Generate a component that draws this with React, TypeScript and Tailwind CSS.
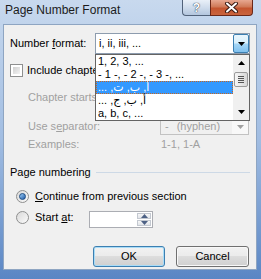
import type { ReactNode } from 'react';

const disabled = 'text-[#a0a0a0]';

function Arrow({ dir, color = '#000' }: { dir: 'up' | 'down'; color?: string }) {
    return (
        <svg width="7" height="4" viewBox="0 0 7 4">
            <polygon points={dir === 'down' ? '0,0 7,0 3.5,4' : '0,4 7,4 3.5,0'} fill={color} />
        </svg>
    );
}

function Radio({ checked }: { checked?: boolean }) {
    return (
        <span className="flex h-[13px] w-[13px] shrink-0 items-center justify-center rounded-full border border-[#8e8f8f] bg-gradient-to-br from-[#d9d9d9] to-[#fbfbfb]">
            {checked && (
                <span className="h-[7px] w-[7px] rounded-full border border-[#1b4a82] bg-gradient-to-br from-[#9fd0f8] to-[#1d5aa6]" />
            )}
        </span>
    );
}

function Button({ children, primary }: { children: ReactNode; primary?: boolean }) {
    return (
        <div
            className={`flex h-[21px] items-center justify-center rounded-[3px] border bg-[linear-gradient(#f2f2f2,#ebebeb_50%,#dddddd_50%,#cfcfcf)] ${primary
                ? 'w-[72px] border-[#3c7fb1] shadow-[inset_0_0_0_1px_#a9dcf7]'
                : 'w-[73px] border-[#707070] shadow-[inset_0_0_0_1px_#f8f8f8]'
                }`}
        >
            {children}
        </div>
    );
}

export default function App() {
    const items = [
        { label: '1, 2, 3, ...' },
        { label: '- 1 -, - 2 -, - 3 -, ...' },
        { label: 'أ, ب, ت, ...', rtl: true, selected: true },
        { label: 'أ, ب, ج, ...', rtl: true },
        { label: 'a, b, c, ...' },
    ];

    return (
        <div className="flex h-[279px] w-[261px] flex-col overflow-hidden bg-gradient-to-b from-[#c8d9ee] via-[#a1bde2] to-[#5a86c4] font-['Liberation_Sans','DejaVu_Sans',sans-serif] text-[11px] text-black">
            {/* Title bar */}
            <div className="flex h-[24px] shrink-0 items-start">
                <span className="pl-[5px] pt-[3px] text-[12px] leading-[15px] text-[#1b1b1b]">Page Number Format</span>
                <div className="ml-auto mr-[8px] flex h-[16px]">
                    <div className="flex w-[28px] items-center justify-center rounded-bl-[4px] border border-r-0 border-t-0 border-[#51627a] bg-gradient-to-b from-[#e9f0f8] via-[#cfdcec] to-[#b3c6de] text-[12px] font-bold leading-none text-white [text-shadow:0_0_1px_#2c3a4c,0_0_1px_#2c3a4c]">
                        ?
                    </div>
                    <div className="flex w-[43px] items-center justify-center rounded-br-[4px] border border-t-0 border-[#6b2818] bg-[linear-gradient(#e7a891,#d07a58_45%,#c4552f_55%,#c9643d)]">
                        <svg width="15" height="11" viewBox="0 0 15 11">
                            <path d="M3 1.5 L12 9.5 M12 1.5 L3 9.5" stroke="#3a1a12" strokeWidth="4" strokeLinecap="round" />
                            <path d="M3 1.5 L12 9.5 M12 1.5 L3 9.5" stroke="#fff" strokeWidth="2" strokeLinecap="round" />
                        </svg>
                    </div>
                </div>
            </div>

            {/* Client area */}
            <div className="relative ml-[3px] flex h-[246px] w-[254px] shrink-0 flex-col border border-[#8ea5c2] bg-[#f0f0f0]">
                <div className="mt-[8px] flex h-[21px] items-center pl-[6px]">
                    <span className="w-[85px]">
                        Number <span className="underline">f</span>ormat:
                    </span>
                    <div className="flex h-[21px] w-[155px] border border-[#8d9cae] bg-white">
                        <span className="flex-1 pl-[3px] leading-[19px]">i, ii, iii, ...</span>
                        <div className="flex w-[16px] items-center justify-center rounded-[2px] border border-[#3c7fb1] bg-[linear-gradient(#eaf6fd,#d9f0fc_45%,#a4d6f6_55%,#7fc0ee)]">
                            <Arrow dir="down" />
                        </div>
                    </div>
                </div>

                <div className="mt-[10px] flex h-[13px] items-center pl-[6px]">
                    <span className="h-[13px] w-[13px] border border-[#8e8f8f] bg-white p-[2px]">
                        <span className="block h-full w-full bg-gradient-to-br from-[#cfcfcf] to-[#f4f4f4]" />
                    </span>
                    <span className="ml-[4px]">
                        Include chapter <span className="underline">n</span>umber
                    </span>
                </div>

                <div className={`mt-[13px] h-[14px] pl-[24px] leading-[14px] ${disabled}`}>Chapter starts with style:</div>

                <div className="mt-[14px] flex h-[17px] items-center pl-[24px]">
                    <span className={`w-[132px] ${disabled}`}>
                        Use s<span className="underline">e</span>parator:
                    </span>
                    <div className={`flex h-[17px] w-[89px] border border-[#c2c2c2] ${disabled}`}>
                        <span className="flex-1 pl-[4px] leading-[15px]">
                            -<span className="ml-[8px]">(hyphen)</span>
                        </span>
                        <div className="flex w-[16px] items-center justify-center bg-[#f8f8f8]">
                            <Arrow dir="down" color="#a0a0a0" />
                        </div>
                    </div>
                </div>

                <div className={`mt-[2px] flex h-[14px] items-center pl-[24px] ${disabled}`}>
                    <span className="w-[133px]">Examples:</span>
                    <span>1-1, 1-A</span>
                </div>

                <div className="mt-[14px] flex h-[14px] items-center pl-[6px] pr-[6px]">
                    <span>Page numbering</span>
                    <div className="ml-[5px] h-px flex-1 bg-[#cdd9e6]" />
                </div>

                <div className="mt-[10px] flex h-[14px] items-center pl-[12px]">
                    <Radio checked />
                    <span className="ml-[6px]">
                        <span className="underline">C</span>ontinue from previous section
                    </span>
                </div>

                <div className="mt-[8px] flex h-[17px] items-start pl-[12px]">
                    <div className="flex h-[12px] w-[73px] items-center">
                        <Radio />
                        <span className="ml-[6px]">
                            Start <span className="underline">a</span>t:
                        </span>
                    </div>
                    <div className="flex h-[17px] w-[64px] justify-end border border-[#abadb3] bg-white p-px">
                        <div className="flex w-[14px] flex-col gap-px">
                            <div className="flex flex-1 items-center justify-center border border-[#c3c8d0] bg-gradient-to-b from-[#f7f7f7] to-[#e2e5ea]">
                                <Arrow dir="up" color="#4d6185" />
                            </div>
                            <div className="flex flex-1 items-center justify-center border border-[#c3c8d0] bg-gradient-to-b from-[#f7f7f7] to-[#e2e5ea]">
                                <Arrow dir="down" color="#4d6185" />
                            </div>
                        </div>
                    </div>
                </div>

                <div className="mt-[18px] flex h-[21px] justify-end gap-[11px] pr-[7px]">
                    <Button primary>OK</Button>
                    <Button>Cancel</Button>
                </div>

                {/* Open drop-down list */}
                <div className="absolute left-[91px] top-[29px] flex h-[67px] w-[155px] border border-[#646464] bg-white">
                    <div className="flex flex-1 flex-col">
                        {items.map((item) => (
                            <div
                                key={item.label}
                                className={`h-[13px] pl-[2px] leading-[13px] ${item.selected
                                    ? 'bg-[#3399ff] text-white outline-1 -outline-offset-1 outline-dotted outline-[#c9661e]'
                                    : ''
                                    }`}
                            >
                                {item.rtl ? <span dir="rtl">{item.label}</span> : item.label}
                            </div>
                        ))}
                    </div>
                    <div className="flex w-[16px] flex-col bg-[#f0f0f0]">
                        <div className="flex h-[16px] items-center justify-center">
                            <Arrow dir="up" />
                        </div>
                        <div className="mx-px mt-px flex h-[15px] flex-col items-center justify-center gap-px rounded-[2px] border border-[#9a9a9a] bg-gradient-to-r from-[#f6f6f6] to-[#d8d8d8]">
                            <span className="h-px w-[6px] bg-[#555]" />
                            <span className="h-px w-[6px] bg-[#555]" />
                            <span className="h-px w-[6px] bg-[#555]" />
                            <span className="h-px w-[6px] bg-[#555]" />
                        </div>
                        <div className="flex-1" />
                        <div className="flex h-[16px] items-center justify-center">
                            <Arrow dir="down" />
                        </div>
                    </div>
                </div>
            </div>
        </div>
    );
}
